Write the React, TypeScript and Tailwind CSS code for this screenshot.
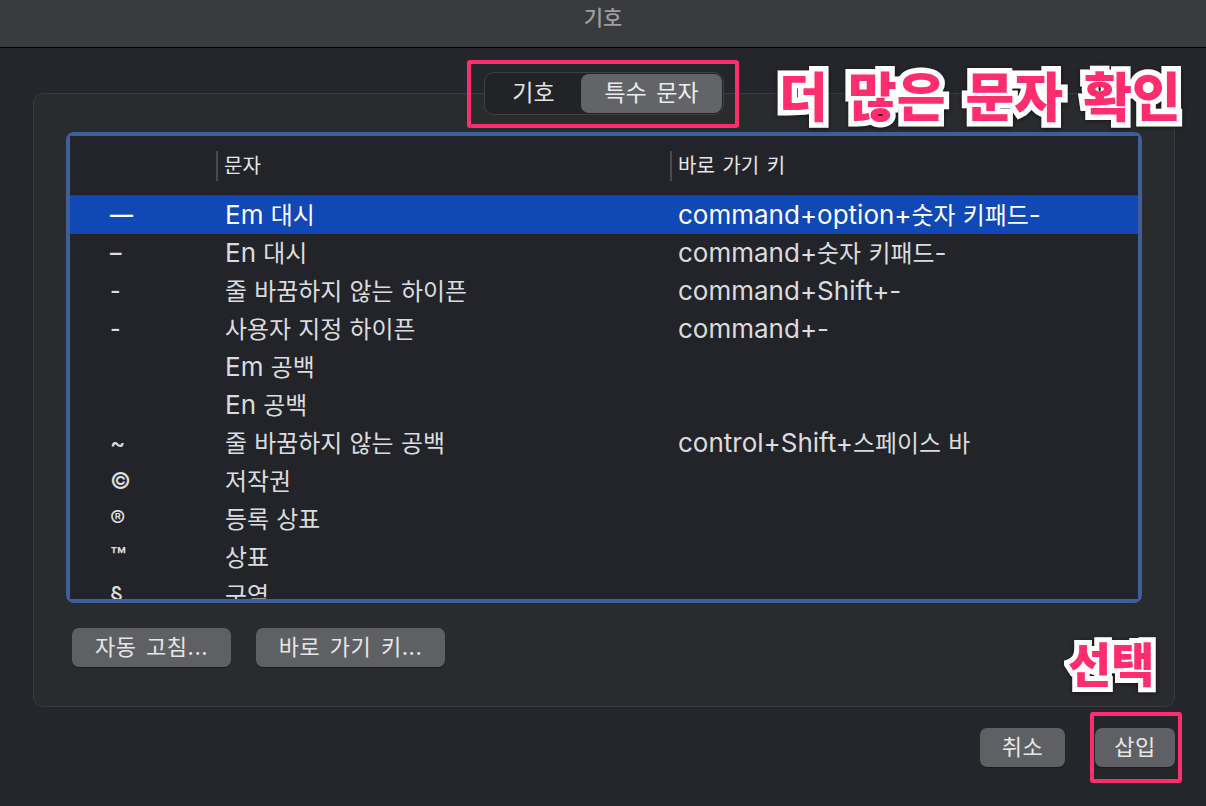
import * as React from "react";

const rows: [string, string, string][] = [
  ["—", "Em 대시", "command+option+숫자 키패드-"],
  ["–", "En 대시", "command+숫자 키패드-"],
  ["-", "줄 바꿈하지 않는 하이픈", "command+Shift+-"],
  ["-", "사용자 지정 하이픈", "command+-"],
  ["", "Em 공백", ""],
  ["", "En 공백", ""],
  ["~", "줄 바꿈하지 않는 공백", "control+Shift+스페이스 바"],
  ["©", "저작권", ""],
  ["®", "등록 상표", ""],
  ["™", "상표", ""],
  ["§", "구역", ""],
];

const font = "font-['Inter','Noto_Sans_CJK_KR',sans-serif]";

// hangul runs a bit smaller than latin, like Apple SD Gothic next to SF
function Mixed({ text }: { text: string }) {
  const parts = text.split(/([\u3130-\u318F\uAC00-\uD7AF]+)/);
  return (
    <>
      {parts.map((p, i) =>
        i % 2 === 1 ? (
          <span key={i} className="text-[0.92em]">
            {p}
          </span>
        ) : (
          p
        )
      )}
    </>
  );
}

function MacButton({ label, className }: { label: string; className?: string }) {
  return (
    <button
      className={`flex h-[39px] items-center justify-center rounded-[7px] bg-[#5f6064] text-[22px] tracking-[0.5px] text-[#e6e6e8] shadow-[0_1px_1px_rgba(0,0,0,0.35)] [word-spacing:3px] ${className ?? ""}`}
    >
      {label}
    </button>
  );
}

export default function App() {
  return (
    <div className={`relative flex h-[806px] w-[1206px] flex-col overflow-hidden bg-[#25262b] ${font}`}>
      {/* title bar */}
      <div className="flex h-[48px] shrink-0 justify-center border-b border-black bg-[#3a3b3f] pt-[3px]">
        <span className="text-[21px] font-medium leading-[30px] text-[#9d9ea2]">기호</span>
      </div>

      <div className="flex flex-1 flex-col pl-[33px] pr-[31px] pt-[24px]">
        {/* segmented control */}
        <div className="relative z-10 -mb-[22px] flex justify-center">
          <div className="flex h-[43px] w-[240px] items-center rounded-[10px] border border-[#3f4044] bg-[#222327] p-[1px]">
            <div className="flex h-full w-[95px] items-center justify-center text-[23px] text-[#e2e2e4]">기호</div>
            <div className="flex h-[39px] flex-1 items-center justify-center rounded-[8px] bg-[#636468] text-[23px] text-[#ececee] [word-spacing:3px]">
              특수 문자
            </div>
          </div>
        </div>

        {/* group box */}
        <div className="flex h-[614px] flex-col rounded-[10px] border border-[#3a3b3f] bg-[#2a2b2f] px-[32px] pb-[39px] pt-[38px]">
          <div className="h-[471px] rounded-[8px] bg-[#3e5f99] p-[4px]">
            <div className="h-full overflow-hidden bg-[#232429]">
              <div className="grid h-[60px] grid-cols-[146px_454px_1fr] items-center border-b border-[#3b3c41] text-[20px] text-[#e6e6e8] [word-spacing:2px]">
                <div />
                <div className="flex h-[30px] items-center border-l-2 border-[#48494e] pl-[6px]">문자</div>
                <div className="flex h-[30px] items-center border-l-2 border-[#48494e] pl-[6px]">바로 가기 키</div>
              </div>
              {rows.map(([sym, name, key], i) => (
                <div
                  key={i}
                  className={`grid h-[38px] grid-cols-[146px_454px_1fr] items-center text-[26px] leading-[30px] ${
                    i === 0 ? "bg-[#1048b6] text-white" : "text-[#dcdcde]"
                  }`}
                >
                  <div className="pl-[40px] text-[23px] font-medium">{sym === "™" ? <span className="text-[26px] font-semibold">{sym}</span> : sym}</div>
                  <div className="whitespace-nowrap pl-[9px]">
                    <Mixed text={name} />
                  </div>
                  <div className="whitespace-nowrap pl-[8px]">
                    <Mixed text={key} />
                  </div>
                </div>
              ))}
            </div>
          </div>
          <div className="mt-[25px] flex gap-[25px] pl-[6px]">
            <MacButton label="자동 고침..." className="w-[159px]" />
            <MacButton label="바로 가기 키..." className="w-[189px]" />
          </div>
        </div>

        {/* dialog buttons */}
        <div className="mt-[21px] flex justify-end gap-[30px]">
          <MacButton label="취소" className="w-[85px]" />
          <MacButton label="삽입" className="w-[80px]" />
        </div>
      </div>

      {/* annotations */}
      <div className="absolute left-[467px] top-[60px] h-[68px] w-[272px] rounded-[3px] border-4 border-[#fe2d6d]" />
      <div className="absolute left-[1090px] top-[712px] h-[71px] w-[92px] rounded-[3px] border-4 border-[#fe2d6d]" />
      <div className="absolute left-[779px] top-[58px] whitespace-nowrap font-['Noto_Sans_CJK_KR',sans-serif] text-[53px] font-black leading-[72px] text-[#fe2d6d] [-webkit-text-stroke:11px_#ffffff] [paint-order:stroke_fill] [word-spacing:8px] drop-shadow-[0_1px_2px_rgba(0,0,0,0.5)]">
        더 많은 문자 확인
      </div>
      <div className="absolute left-[1068px] top-[630px] whitespace-nowrap font-['Noto_Sans_CJK_KR',sans-serif] text-[47px] font-black leading-[64px] text-[#fe2d6d] [-webkit-text-stroke:10px_#ffffff] [paint-order:stroke_fill] drop-shadow-[0_1px_2px_rgba(0,0,0,0.5)]">
        선택
      </div>
    </div>
  );
}
